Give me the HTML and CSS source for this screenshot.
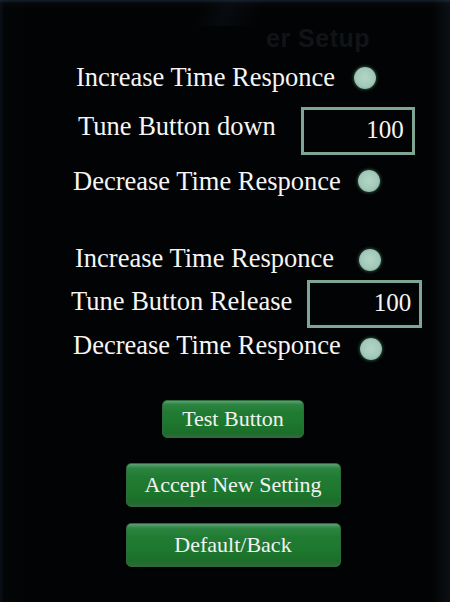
FILE: index.html
```html
<!DOCTYPE html>
<html lang="en">
<head>
<meta charset="utf-8">
<title>Tuner Setup</title>
<link rel="stylesheet" href="styles.css">
</head>
<body>
<div class="screen">
  <header class="header"><span class="ghost-title">er Setup</span></header>
  <section class="panel">
    <div class="row r1"><span class="label">Increase Time Responce</span><span class="dot"></span></div>
    <div class="row row-box r2"><span class="label">Tune Button down</span><span class="valuebox">100</span></div>
    <div class="row r3"><span class="label">Decrease Time Responce</span><span class="dot"></span></div>
    <div class="row r4"><span class="label">Increase Time Responce</span><span class="dot"></span></div>
    <div class="row row-box r5"><span class="label">Tune Button Release</span><span class="valuebox">100</span></div>
    <div class="row r6"><span class="label">Decrease Time Responce</span><span class="dot dot-low"></span></div>
  </section>
  <section class="actions">
    <button class="btn btn-test">Test Button</button>
    <button class="btn btn-wide btn-accept">Accept New Setting</button>
    <button class="btn btn-wide btn-default">Default/Back</button>
  </section>
</div>
</body>
</html>
```
FILE: styles.css
```css
html, body {
  margin: 0;
  padding: 0;
  background: #020304;
}
.screen {
  width: 450px;
  height: 602px;
  overflow: hidden;
  background:
    linear-gradient(to bottom, rgba(40,60,80,0.5) 0px, rgba(20,30,40,0.2) 3px, rgba(0,0,0,0) 8px),
    linear-gradient(110deg, rgba(0,0,0,0) 44%, rgba(12,18,26,0.5) 50%, rgba(0,0,0,0) 58%) top / 100% 26px no-repeat,
    linear-gradient(to right, #0a1018 0px, #030507 4px, #020304 30px, #020304 96%, #0b1016 100%);
  font-family: "Liberation Serif", "Times New Roman", serif;
  color: #f5f5f5;
}
.header {
  box-sizing: border-box;
  height: 62px;
  padding: 23px 0 0 266px;
}
.ghost-title {
  display: block;
  font-family: "Liberation Sans", Arial, sans-serif;
  font-weight: bold;
  font-size: 25px;
  line-height: 30px;
  color: #111316;
  letter-spacing: 0.5px;
}
.panel {
  display: flex;
  flex-direction: column;
}
.row {
  display: flex;
  align-items: center;
  height: 30px;
  font-size: 26.5px;
  line-height: 30px;
  white-space: nowrap;
}
.row-box {
  height: 48px;
  align-items: flex-start;
}
.row-box .label { margin-top: 4px; }
.r1 { padding-left: 76px; gap: 19px; }
.r2 { padding-left: 78px; gap: 25px; margin-top: 15px; }
.r3 { padding-left: 73px; gap: 17px; margin-top: 11px; }
.r4 { padding-left: 75px; gap: 25px; margin-top: 47px; }
.r5 { padding-left: 71px; gap: 15px; margin-top: 7px; }
.r5 .label { margin-top: 6px; }
.r6 { padding-left: 73px; gap: 19px; margin-top: 2px; }
.dot {
  width: 22px;
  height: 22px;
  border-radius: 50%;
  background: radial-gradient(circle at 50% 48%, #b3d5c7 0%, #a3c9b9 55%, #7fae9a 85%, #4f8a72 100%);
  box-shadow: 0 0 3px 1px rgba(70,130,105,0.55);
  flex: none;
}
.r1 .dot { margin-top: 2px; }
.r4 .dot { margin-top: 4px; }
.dot-low { margin-top: 8px; }
.valuebox {
  box-sizing: border-box;
  width: 114px;
  height: 48px;
  border: 3px solid #7fa595;
  font-size: 25px;
  line-height: 40px;
  text-align: right;
  padding-right: 8px;
  color: #f5f5f5;
  flex: none;
}
.r5 .valuebox { width: 115px; }
.actions {
  display: flex;
  flex-direction: column;
  align-items: center;
  padding-left: 16px;
  margin-top: 40px;
}
.btn {
  box-sizing: border-box;
  font-family: "Liberation Serif", "Times New Roman", serif;
  font-size: 22px;
  color: #f2f2f2;
  border: 1px solid #2d6b3a;
  border-radius: 5px;
  background: linear-gradient(to bottom, #5f9e74 0%, #2c8540 10%, #217c33 30%, #1e782e 60%, #1b6e2a 88%, #2f6a3c 100%);
  box-shadow: 0 1px 2px rgba(0,0,0,0.6);
  padding: 0;
  margin: 0;
  cursor: pointer;
}
.btn-test {
  width: 142px;
  height: 38px;
}
.btn-wide {
  width: 215px;
  height: 44px;
}
.btn-accept { margin-top: 25px; }
.btn-default { margin-top: 16px; }
```
